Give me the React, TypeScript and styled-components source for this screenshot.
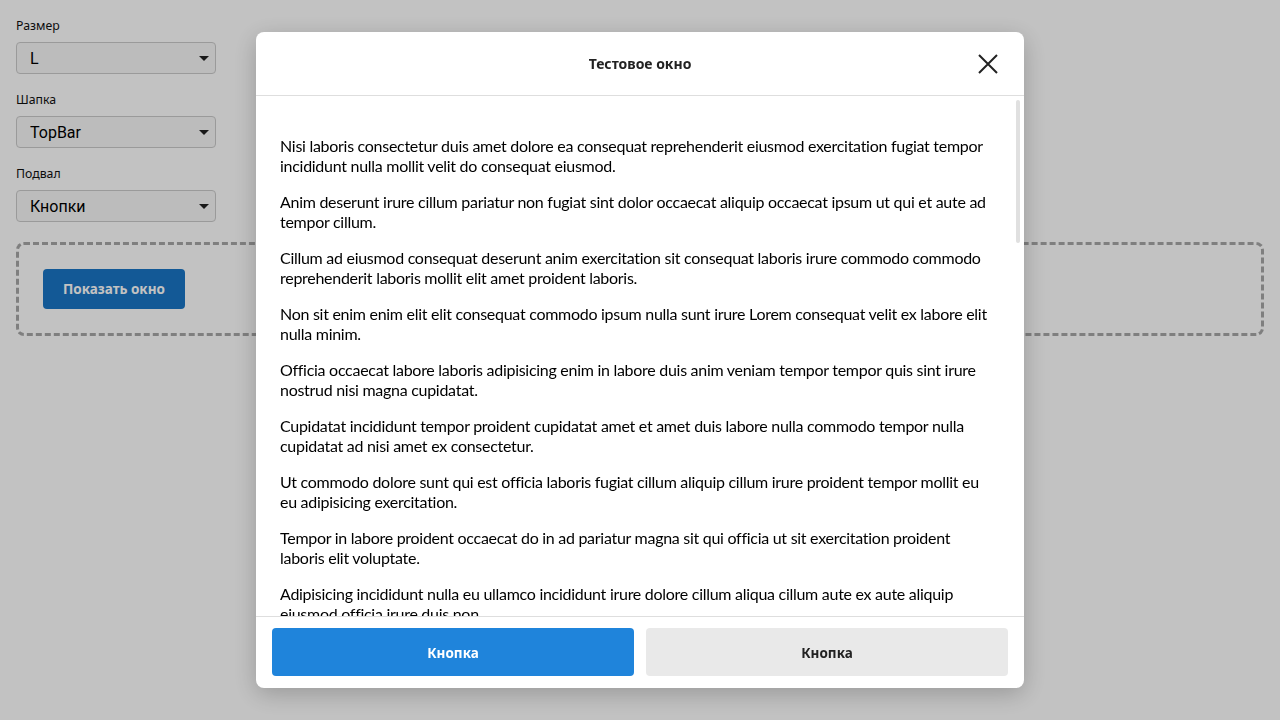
import React from "react";
import styled, { createGlobalStyle } from "styled-components";

const GlobalStyle = createGlobalStyle`
  html, body { margin: 0; padding: 0; background: #ffffff; }
  body { font-family: "Lato", "Noto Sans", sans-serif; color: #000; }
  * { box-sizing: border-box; }
`;

const Page = styled.div`
  padding: 16px;
  display: flex;
  flex-direction: column;
  gap: 20px;
`;

const Controls = styled.div`
  display: flex;
  flex-direction: column;
  gap: 16px;
  width: 200px;
`;

const Field = styled.label`
  display: flex;
  flex-direction: column;
  gap: 6px;
`;

const FieldLabel = styled.span`
  font-family: "Noto Sans", sans-serif;
  font-size: 12.3px;
  line-height: 20px;
  color: #111;
`;

const SelectWrap = styled.div`
  position: relative;
  height: 32px;
`;

const Select = styled.select`
  appearance: none;
  width: 100%;
  height: 32px;
  border: 1px solid #cbcbcb;
  border-radius: 4px;
  background: #f8f8f8;
  padding: 0 28px 0 13px;
  font-family: Roboto, sans-serif;
  font-size: 16px;
  color: #000;
  outline: none;
`;

const Caret = styled.svg`
  position: absolute;
  right: 7px;
  top: 14px;
  pointer-events: none;
`;

const DemoArea = styled.div`
  border: 3px dashed #a8a8a8;
  border-radius: 8px;
  padding: 24px;
  display: flex;
`;

const ShowButton = styled.button`
  height: 40px;
  padding: 0 20px;
  border: none;
  border-radius: 4px;
  background: #1a76c5;
  color: #fff;
  font-family: "Noto Sans", sans-serif;
  font-weight: 700;
  font-size: 13.5px;
`;

const Overlay = styled.div`
  position: fixed;
  inset: 0;
  background: rgba(0, 0, 0, 0.24);
  display: flex;
  justify-content: center;
  align-items: center;
  padding: 32px 0;
`;

const Modal = styled.div`
  width: 768px;
  height: 656px;
  background: #fff;
  border-radius: 8px;
  box-shadow: 0 6px 24px rgba(0, 0, 0, 0.22);
  display: flex;
  flex-direction: column;
  overflow: hidden;
`;

const Header = styled.div`
  position: relative;
  height: 64px;
  flex: none;
  display: flex;
  align-items: center;
  justify-content: center;
  border-bottom: 1px solid #dedede;
`;

const Title = styled.h2`
  margin: 0;
  font-family: "Noto Sans", sans-serif;
  font-size: 14px;
  font-weight: 700;
  color: #222;
`;

const CloseButton = styled.button`
  position: absolute;
  right: 24px;
  top: 20px;
  width: 24px;
  height: 24px;
  padding: 0;
  border: none;
  background: none;
  display: flex;
  align-items: center;
  justify-content: center;
`;

const BodyWrap = styled.div`
  position: relative;
  flex: 1;
  min-height: 0;
  display: flex;
`;

const Body = styled.div`
  flex: 1;
  overflow: hidden;
  padding: 40px 32px 0 24px;
`;

const ScrollThumb = styled.div`
  position: absolute;
  top: 4px;
  right: 4px;
  width: 4px;
  height: 143px;
  border-radius: 2px;
  background: #e0e0e0;
`;

const Paragraph = styled.p`
  margin: 0 0 16px;
  font-size: 16px;
  letter-spacing: -0.28px;
  line-height: 20px;
  color: #000;
`;

const Footer = styled.div`
  flex: none;
  border-top: 1px solid #dedede;
  padding: 11px 16px 12px;
  display: grid;
  grid-template-columns: 1fr 1fr;
  gap: 12px;
`;

const FooterButton = styled.button<{ $primary?: boolean }>`
  height: 48px;
  padding: 1px 0 0;
  border: none;
  border-radius: 4px;
  background: ${(p) => (p.$primary ? "#1f84db" : "#e9e9e9")};
  color: ${(p) => (p.$primary ? "#fff" : "#222")};
  font-family: "Noto Sans", sans-serif;
  font-weight: 700;
  font-size: 13.5px;
`;

const paragraphs = [
  "Nisi laboris consectetur duis amet dolore ea consequat reprehenderit eiusmod exercitation fugiat tempor incididunt nulla mollit velit do consequat eiusmod.",
  "Anim deserunt irure cillum pariatur non fugiat sint dolor occaecat aliquip occaecat ipsum ut qui et aute ad tempor cillum.",
  "Cillum ad eiusmod consequat deserunt anim exercitation sit consequat laboris irure commodo commodo reprehenderit laboris mollit elit amet proident laboris.",
  "Non sit enim enim elit elit consequat commodo ipsum nulla sunt irure Lorem consequat velit ex labore elit nulla minim.",
  "Officia occaecat labore laboris adipisicing enim in labore duis anim veniam tempor tempor quis sint irure nostrud nisi magna cupidatat.",
  "Cupidatat incididunt tempor proident cupidatat amet et amet duis labore nulla commodo tempor nulla cupidatat ad nisi amet ex consectetur.",
  "Ut commodo dolore sunt qui est officia laboris fugiat cillum aliquip cillum irure proident tempor mollit eu eu adipisicing exercitation.",
  "Tempor in labore proident occaecat do in ad pariatur magna sit qui officia ut sit exercitation proident laboris elit voluptate.",
  "Adipisicing incididunt nulla eu ullamco incididunt irure dolore cillum aliqua cillum aute ex aute aliquip eiusmod officia irure duis non.",
  "Esse qui sunt excepteur laborum dolor aute exercitation consectetur cillum ullamco magna enim sint est.",
  "Velit culpa aliqua officia velit sint magna nisi id in adipisicing excepteur aute ad occaecat.",
];

const fields = [
  { label: "Размер", value: "L" },
  { label: "Шапка", value: "TopBar" },
  { label: "Подвал", value: "Кнопки" },
];

export default function App() {
  return (
    <>
      <GlobalStyle />
      <Page>
        <Controls>
          {fields.map((f) => (
            <Field key={f.label}>
              <FieldLabel>{f.label}</FieldLabel>
              <SelectWrap>
                <Select defaultValue={f.value}>
                  <option value={f.value}>{f.value}</option>
                </Select>
                <Caret width="10" height="5" viewBox="0 0 10 5">
                  <path d="M0 0 L10 0 L5 5 Z" fill="#222" />
                </Caret>
              </SelectWrap>
            </Field>
          ))}
        </Controls>
        <DemoArea>
          <ShowButton>Показать окно</ShowButton>
        </DemoArea>
      </Page>
      <Overlay>
        <Modal>
          <Header>
            <Title>Тестовое окно</Title>
            <CloseButton aria-label="Закрыть">
              <svg width="20" height="20" viewBox="0 0 20 20">
                <path d="M1 1 L19 19 M19 1 L1 19" stroke="#222" strokeWidth="2" fill="none" />
              </svg>
            </CloseButton>
          </Header>
          <BodyWrap>
            <Body>
              {paragraphs.map((t, i) => (
                <Paragraph key={i}>{t}</Paragraph>
              ))}
            </Body>
            <ScrollThumb />
          </BodyWrap>
          <Footer>
            <FooterButton $primary>Кнопка</FooterButton>
            <FooterButton>Кнопка</FooterButton>
          </Footer>
        </Modal>
      </Overlay>
    </>
  );
}
